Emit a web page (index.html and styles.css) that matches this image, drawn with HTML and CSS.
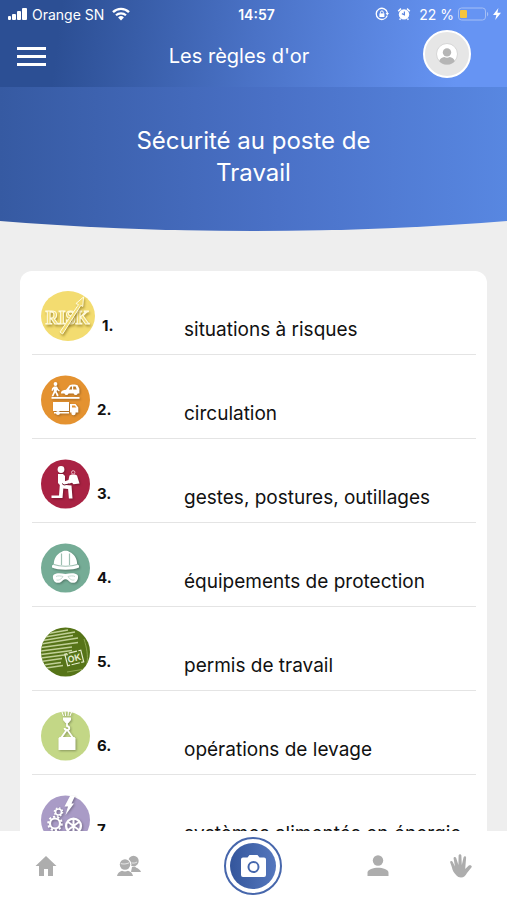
FILE: index.html
```html
<!DOCTYPE html>
<html lang="fr">

<head>
    <meta charset="UTF-8">
    <meta name="viewport" content="width=device-width, initial-scale=1.0">
    <title>Les règles d'or</title>
    <link rel="stylesheet" href="styles.css">
</head>

<body>
    <div class="app">
        <header class="header">
            <div class="status">
                <div class="status-left">
                    <svg width="20" height="14" viewBox="0 0 20 14" fill="#fff" aria-hidden="true">
                        <rect x="0" y="9" width="3" height="4" rx="1"/>
                        <rect x="4" y="7" width="4" height="6" rx="1"/>
                        <rect x="9" y="4" width="4" height="9" rx="1"/>
                        <rect x="14" y="1" width="5" height="12" rx="1"/>
                    </svg>
                    <span>Orange SN</span>
                    <svg class="wifi" width="18" height="14" viewBox="0 0 18 14" fill="none" stroke="#fff" aria-hidden="true">
                        <path d="M1 5.2a11.4 11.4 0 0 1 16 0" stroke-width="2.4"/>
                        <path d="M4 8.3a7.2 7.2 0 0 1 10 0" stroke-width="2.2"/>
                        <path d="M9 13.4l-2.900-3a4.200 4.200 0 0 1 5.800 0z" fill="#fff" stroke="none"/>
                    </svg>
                </div>
                <time class="clock">14:57</time>
                <div class="status-right">
                    <svg width="14" height="14" viewBox="0 0 14 14" fill="none" stroke="#fff" aria-hidden="true">
                        <path d="M12.2 8.6A5.6 5.6 0 1 1 12.4 6" stroke-width="1.3"/>
                        <path d="M10.6 6h3.4l-1.7 2.4z" fill="#fff" stroke="none"/>
                        <rect x="4.4" y="6.4" width="5" height="3.6" fill="#fff" stroke="none"/>
                        <path d="M5.5 6.6V5.3a1.4 1.4 0 0 1 2.8 0v1.3" stroke-width="1"/>
                    </svg>
                    <svg class="alarm" width="14" height="14" viewBox="0 0 14 14" aria-hidden="true">
                        <circle cx="7" cy="7.4" r="5.2" fill="#fff"/>
                        <path d="M1.200 4.200L4 1.600M12.800 4.200L10 1.600M3.600 11.600l-1 1.200M10.400 11.600l1 1.200" stroke="#fff" stroke-width="1.500"/>
                        <path d="M7.4 4.4v3.4L4.9 6.6" fill="none" stroke="#5a84df" stroke-width="1.2"/>
                    </svg>
                    <span class="percent">22 %</span>
                    <svg width="31" height="14" viewBox="0 0 31 14" aria-hidden="true">
                        <rect x="0.5" y="1" width="27" height="12" rx="3" fill="none" stroke="#a5bff5"/>
                        <rect x="2" y="3" width="7" height="8" rx="1" fill="#f5c53c"/>
                        <path d="M29 5v4.4c1.6-.6 1.6-3.8 0-4.4z" fill="#a5bff5"/>
                    </svg>
                    <svg width="8" height="12" viewBox="0 0 8 12" fill="#fff" aria-hidden="true">
                        <path d="M5.4 0L0 7h3.4L2.2 12 8 4.8H4.4z"/>
                    </svg>
                </div>
            </div>
            <div class="toolbar">
                <button class="menu" type="button" aria-label="Menu">
                    <svg width="29" height="20" viewBox="0 0 29 20" fill="#fff" aria-hidden="true">
                        <path d="M0 0h29v3H0zM0 8h29v3H0zM0 16h29v3H0z"/>
                    </svg>
                </button>
                <h1 class="title">Les règles d'or</h1>
                <a class="avatar" href="#profil" aria-label="Profil">
                    <svg width="22" height="22" viewBox="0 0 22 22" aria-hidden="true">
                        <circle cx="11" cy="11" r="10.5" fill="#fff" stroke="#d6d6d6"/>
                        <circle cx="11" cy="9.4" r="4.2" fill="#b5b5b5"/>
                        <path d="M3.2 18.2c.6-2.8 3-3.8 5-4.2 1.8 1 3.8 1 5.6 0 2 .4 4.4 1.4 5 4.2a10.6 10.6 0 0 1-15.600 0z" fill="#b5b5b5"/>
                    </svg>
                </a>
            </div>
        </header>

        <main class="content">
            <section class="hero">
                <h2>Sécurité au poste de Travail</h2>
            </section>

            <ol class="rules">
                <li class="rule">
                    <div class="rule-head">
                        <svg width="54" height="50" viewBox="0 0 54 50" aria-hidden="true">
                            <ellipse cx="27" cy="25" rx="27" ry="25" fill="#f3dc70"/>
                            <text class="risk" x="26.500" y="33">RISK</text>
                            <path class="risk-arrow" d="M19 41L37.500 13.600l-2.600-1L42.500 6l-.7 9.400-2-1L21.600 43z"/>
                        </svg>
                        <span class="number">1.</span>
                    </div>
                    <a href="#regle-1">situations à risques</a>
                </li>
                <li class="rule">
                    <div class="rule-head">
                        <svg width="49" height="50" viewBox="0 0 49 50" aria-hidden="true">
                            <ellipse cx="24.500" cy="25" rx="24.500" ry="24.500" fill="#e49230"/>
                            <g class="glyph">
                                <circle cx="14.500" cy="9" r="1.900"/>
                                <path d="M13 11.400h3l1.200 2.600 1.600 1.400-.8 1-2-1.400-.4 1.400 1.800 3.400v1.400h-1.400l-1.800-3.600-1.800 3.600h-1.800l2.200-5v-2.400l-1 2h-1.200l.4-2.600z"/>
                                <path fill-rule="evenodd" d="M20 17.600c.4-2 2.600-2.600 5-2.800l3.600-4.600c1.400-1 6.600-1 8 0l1.800 3.600v4.600h-1.600a2.200 2.200 0 0 1-4.200 0h-5a2.200 2.200 0 0 1-4.200 0H20zM28 14.600h3V11.600h-1.200zM32.200 14.600h3.600L34.600 11.600h-2.400z"/>
                                <path d="M10.500 22h28v1.800h-28z"/>
                                <path d="M12 27h16v9H12zM29 29h5.500l2.800 3.400V37.500H29zM13 37h15v1.400H13z"/>
                                <circle cx="17" cy="38" r="2"/>
                                <circle cx="32.500" cy="38" r="2.200"/>
                            </g>
                            <path d="M31 30.400h2.800l1.600 2.200H31z" fill="#e49230"/>
                        </svg>
                        <span class="number">2.</span>
                    </div>
                    <a href="#regle-2">circulation</a>
                </li>
                <li class="rule">
                    <div class="rule-head">
                        <svg width="49" height="50" viewBox="0 0 49 50" aria-hidden="true">
                            <ellipse cx="24.500" cy="25" rx="24.500" ry="24.500" fill="#a92243"/>
                            <g class="glyph">
                                <circle cx="20" cy="10.500" r="3.400"/>
                                <path d="M17 15h5l2 2v7l1 2 5.500.6 1 13h-3.600l-.8-9.600-4.800-.4L21.500 39H10.500v-2.600h7.500l.8-10.400-1.800-2z"/>
                                <path d="M23 22.500l4.500-1.500 1-4.500 2-1h3.500l2 1 2.500 8-6 .8-1.500-1.500-7 2z"/>
                            </g>
                            <circle cx="32.200" cy="13.400" r="1.700" fill="none" stroke="#e8b9c4" stroke-width="1"/>
                            <path d="M21 24.500l2 1.500 5-1" fill="none" stroke="#6d1830"/>
                        </svg>
                        <span class="number">3.</span>
                    </div>
                    <a href="#regle-3">gestes, postures, outillages</a>
                </li>
                <li class="rule">
                    <div class="rule-head">
                        <svg width="49" height="50" viewBox="0 0 49 50" aria-hidden="true">
                            <ellipse cx="24.500" cy="25" rx="24.500" ry="24.500" fill="#75ac96"/>
                            <g class="glyph">
                                <path d="M11 22.500l1.800-1c0-6 3-10.500 7.700-12.500 1.500-1.800 6.500-1.800 8 0 4.700 2 7.700 6.500 7.700 12.500l1.800 1v2c-6 3-21 3-27 0z"/>
                                <path d="M13 31.500c3-2 7.500-1.400 11.500-.4 4-1 8.500-1.600 11.500.4 2 1.200 1 6-1 7.500-3 1.800-6 .6-8-1.800-1.200-1.400-3.800-1.400-5 0-2 2.400-5 3.600-8 1.800-2-1.500-3-6.300-1-7.500z"/>
                            </g>
                            <path d="M20.500 22V10.500M28.500 22V10.500M12.800 21.500c6 2.300 17.400 2.300 23.400 0" fill="none" stroke="#9dbfb1" stroke-width="1.200"/>
                            <path d="M15 33.500c2-1 5-.6 7 0-1 2-4 4.400-6.400 3.400M34 33.500c-2-1-5-.6-7 0 1 2 4 4.400 6.400 3.400" fill="none" stroke="#c6dcd3"/>
                        </svg>
                        <span class="number">4.</span>
                    </div>
                    <a href="#regle-4">équipements de protection</a>
                </li>
                <li class="rule">
                    <div class="rule-head">
                        <svg width="49" height="50" viewBox="0 0 49 50" aria-hidden="true">
                            <clipPath id="permit">
                                <ellipse cx="24.500" cy="25" rx="24.500" ry="24.500"/>
                            </clipPath>
                            <g clip-path="url(#permit)">
                                <path d="M0 0h49v50H0z" fill="#567418"/>
                                <path d="M7 6.500l20-3.500M4 10l30-5M2 13.500l30-5M0 17l37-6M0 20.500l37-5M0 24l31-4M0 27.500l31-4M0 31l27-3.500M0 34.500l21-3M2 38l18-2.500M5 41l17-2.500" fill="none" stroke="#c0cf96" stroke-width="1.400"/>
                                <path d="M43 12c3 10 4 16 3 25M26 45l18-3" fill="none" stroke="#8ca650" stroke-width="1"/>
                                <g transform="rotate(-14 33 31)">
                                    <path d="M27.500 25H25v12h2.500M39 25h2.500v12H39M29 25h8.500M29 37h8.500" fill="none" stroke="#e3eacb" stroke-width="1.200"/>
                                    <text class="stamp" x="33.200" y="34.500">OK</text>
                                </g>
                            </g>
                        </svg>
                        <span class="number">5.</span>
                    </div>
                    <a href="#regle-5">permis de travail</a>
                </li>
                <li class="rule">
                    <div class="rule-head">
                        <svg width="49" height="50" viewBox="0 0 49 50" aria-hidden="true">
                            <ellipse cx="24.500" cy="25" rx="24.500" ry="24.500" fill="#c3d786"/>
                            <g class="glyph">
                                <path d="M21 1l1.500 4M24 0l.6 5M27.500 0L27 5M30.500 1L29 5" fill="none" stroke="#fff" stroke-width="1"/>
                                <path d="M22 6.500h8V9l-2.500 3h-3L22 9z"/>
                                <path d="M26 12v3c3 .5 3 4 0 4-1.600 0-2.400-1-2.400-2" fill="none" stroke="#fff" stroke-width="1.800"/>
                                <path d="M26 18.500L20 27M26 18.500L32 27" fill="none" stroke="#fff" stroke-width="1.800"/>
                                <path d="M18.500 26h15l1 1.500V39h-17V27.500z"/>
                            </g>
                        </svg>
                        <span class="number">6.</span>
                    </div>
                    <a href="#regle-6">opérations de levage</a>
                </li>
                <li class="rule">
                    <div class="rule-head">
                        <svg width="49" height="50" viewBox="0 0 49 50" aria-hidden="true">
                            <ellipse cx="24.500" cy="25" rx="24.500" ry="24.500" fill="#a99bc6"/>
                            <g class="glyph">
                                <path d="M29 1h5l-3.500 7.500H33L24.500 20l2.500-8.500h-3.500z"/>
                                <g fill="none" stroke="#fff">
                                    <circle cx="17.500" cy="17" r="3" stroke-width="1.600"/>
                                    <circle cx="17.500" cy="17" r="4.200" stroke-width="1.200" stroke-dasharray="1.600 1.700"/>
                                    <circle cx="14" cy="28.500" r="5" stroke-width="2.200"/>
                                    <circle cx="14" cy="28.500" r="6.800" stroke-width="2" stroke-dasharray="2.200 2.070"/>
                                    <circle cx="32.500" cy="31" r="7.400" stroke-width="2.400"/>
                                    <path d="M27 27l11 8M38 27l-11 8M32.500 24v14" stroke-width="2"/>
                                </g>
                            </g>
                        </svg>
                        <span class="number">7.</span>
                    </div>
                    <a href="#regle-7">systèmes alimentés en énergie</a>
                </li>
            </ol>
        </main>

        <nav class="tabs">
            <a href="#accueil" aria-label="Accueil">
                <svg width="22" height="20" viewBox="0 0 22 20" aria-hidden="true">
                    <path d="M11 0l10.500 10H18v10h-5v-7H9v7H4V10H.5z"/>
                </svg>
            </a>
            <a href="#equipe" aria-label="Équipe">
                <svg width="24" height="22" viewBox="0 0 24 22" aria-hidden="true">
                    <circle cx="16.500" cy="6" r="5.200"/>
                    <path d="M15 12l3-.5c1 1.800 5 2 6 5.500H14z"/>
                    <circle cx="8" cy="9.500" r="6.400" fill="#fff"/>
                    <circle cx="8" cy="9.500" r="5.200"/>
                    <path d="M0 21c.6-3 2.600-4.500 5-5.200 2 1 4 1 6 0 2.400.7 4.400 2.200 5 5.200z"/>
                    <path d="M3.800 8.600c3 .8 5.600.4 8.400-.8M14.500 7.800c2 .6 4 .2 5.500-.8" fill="none" stroke="#fff" stroke-width=".7"/>
                </svg>
            </a>
            <button class="camera" type="button" aria-label="Prendre une photo">
                <svg width="25" height="22" viewBox="0 0 25 22" aria-hidden="true">
                    <path fill-rule="evenodd" d="M8.500 0h8l2 2.500h4.500a2 2 0 0 1 2 2V20a2 2 0 0 1-2 2H2a2 2 0 0 1-2-2V4.500a2 2 0 0 1 2-2h4.500zM12.500 6a6 6 0 1 0 0 12 6 6 0 0 0 0-12z"/>
                    <circle cx="12.500" cy="12" r="4"/>
                </svg>
            </button>
            <a href="#compte" aria-label="Compte">
                <svg width="22" height="22" viewBox="0 0 22 22" aria-hidden="true">
                    <circle cx="11" cy="5.500" r="5.200"/>
                    <path d="M.5 21v-3.200c0-3.200 6-5 10.500-5s10.500 1.800 10.500 5V21z"/>
                </svg>
            </a>
            <a href="#alerte" aria-label="Alerte">
                <svg width="22" height="24" viewBox="0 0 22 24" aria-hidden="true">
                    <path d="M6.500 21.500C4 19 2.500 16.500 1.800 13L.2 8.500C-.1 6.900 1.900 6.300 2.600 7.800L5 12.500 3.600 4.600C3.400 2.700 5.600 2.300 6.200 4.100L8.400 11 8.600 1.700c.1-2 2.700-2 2.800 0L11.800 11l1.700-7.600c.5-1.800 2.800-1.300 2.600.5L15.200 15l3.600-3.400c1.600-1.200 3.800.3 2.600 1.800L17 19c-1.400 2.400-3 4.500-6 4.500-2 0-3.400-.8-4.500-2z"/>
                </svg>
            </a>
        </nav>
    </div>
</body>

</html>
```
FILE: styles.css
```css
* {
    box-sizing: border-box;
}

body {
    margin: 0;
    font-family: Inter, "Liberation Sans", sans-serif;
    background: #eeeeee;
    color: #111;
}

a {
    color: inherit;
    text-decoration: none;
}

button {
    border: none;
    background: none;
    padding: 0;
    cursor: pointer;
}

svg {
    display: block;
    flex: none;
}

.app {
    display: flex;
    flex-direction: column;
    height: 100vh;
}

/* header */
.header {
    background: linear-gradient(97deg, #2c4f94 12%, #4a72c6 50%, #6694f3 90%);
    color: #fff;
    padding-bottom: 7px;
}

.status {
    display: grid;
    grid-template-columns: 1fr auto 1fr;
    align-items: center;
    height: 28px;
    padding: 0 6px 0 8px;
    font-size: 14px;
}

.status-left,
.status-right {
    display: flex;
    align-items: center;
    gap: 4px;
}

.status-right {
    justify-content: flex-end;
}

.wifi,
.alarm,
.percent {
    margin-left: 4px;
}

.clock {
    padding-left: 4px;
    font-weight: 600;
}

.toolbar {
    display: flex;
    align-items: center;
    height: 52px;
    padding: 0 36px 0 17px;
}

.menu {
    width: 38px;
    height: 52px;
    padding-top: 6px;
    display: flex;
    align-items: center;
}

.title {
    flex: 1;
    margin: 0;
    padding-top: 4px;
    text-align: center;
    font-size: 20px;
    font-weight: 400;
}

.avatar {
    display: flex;
    align-items: center;
    justify-content: center;
    width: 48px;
    height: 48px;
    border: 2px solid #fff;
    border-radius: 50%;
    background: #e6e6e6;
}

/* content */
.content {
    flex: 1;
    min-height: 0;
    overflow-y: auto;
    scrollbar-width: none;
}

.hero {
    height: 144px;
    padding: 38px 100px 0;
    background: linear-gradient(90deg, #365aa2, #4a71c7 55%, #5887e1);
    clip-path: ellipse(136% 100% at 50% 0);
}

.hero h2 {
    max-width: 280px;
    margin: 0 auto;
    color: #fff;
    text-align: center;
    font-size: 24px;
    font-weight: 400;
    line-height: 32px;
}

.rules {
    list-style: none;
    margin: 40px 20px;
    padding: 0 11px 0 12px;
    background: #fff;
    border-radius: 12px;
}

.rule {
    display: flex;
    height: 84px;
    padding: 20px 9px 0;
    border-bottom: 1px solid #e4e4e4;
    font-size: 19px;
    line-height: 24px;
}

.rule:last-child {
    border-bottom: none;
}

.rule a {
    padding-top: 27px;
    white-space: nowrap;
}

.rule-head {
    display: flex;
    gap: 7px;
    width: 143px;
    flex: none;
}

.number {
    padding-top: 23px;
    font-size: 15px;
    font-weight: 700;
}

.glyph {
    fill: #fff;
    filter: drop-shadow(1px 1px 1px rgba(0, 0, 0, 0.3));
}

.risk,
.risk-arrow {
    fill: #f3dc70;
    stroke: #fffbe0;
    stroke-width: 1px;
    filter: drop-shadow(1px 2px 1px rgba(120, 95, 10, 0.5));
}

.risk {
    font-family: "Liberation Serif", serif;
    font-size: 18px;
    font-weight: 700;
    text-anchor: middle;
}

.stamp {
    font-size: 9px;
    font-weight: 700;
    text-anchor: middle;
    fill: #e3eacb;
}

/* bottom tabs */
.tabs {
    display: grid;
    grid-template-columns: 1fr 1fr 2fr 1fr 1fr;
    align-items: center;
    justify-items: center;
    height: 69px;
    padding: 0 5px;
    background: #fff;
    fill: #adadad;
}

.camera {
    display: flex;
    align-items: center;
    justify-content: center;
    width: 58px;
    height: 58px;
    border: 2px solid #4767ac;
    border-radius: 50%;
    padding: 4px;
    background: linear-gradient(90deg, #34569c, #5577bd) content-box;
    fill: #fff;
}
```
